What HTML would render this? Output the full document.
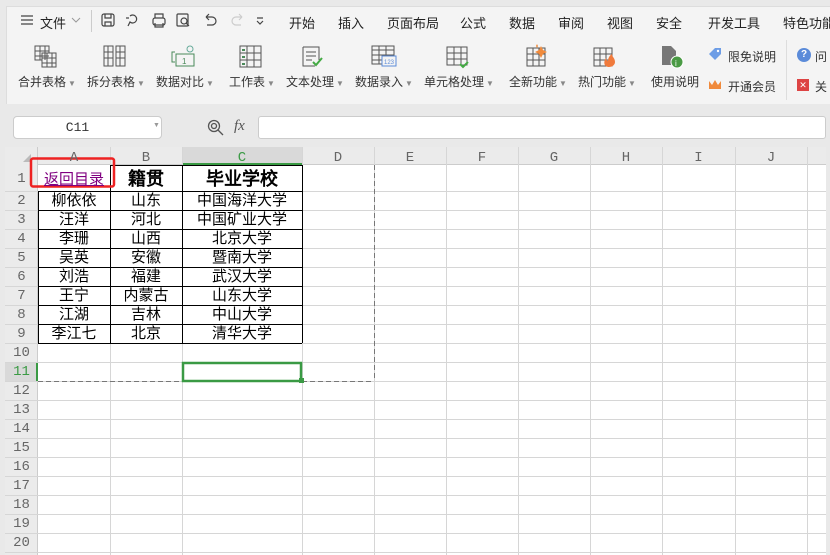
<!DOCTYPE html>
<html><head><meta charset="utf-8"><style>
*{margin:0;padding:0;box-sizing:border-box}
body{width:830px;height:555px;overflow:hidden;background:#e9e9e9;font-family:"Liberation Sans","Noto Sans CJK SC",sans-serif;position:relative;color:#333}
.a{position:absolute;white-space:nowrap}
.tb{position:absolute;left:6px;top:6px;width:824px;height:98px;background:#f4f4f4;border-top:1px solid #ddd;border-left:1px solid #ddd}
.menu{font-size:13px;top:13px;color:#222}
.lbl{font-size:12px;top:73px;color:#333}
.lbl i{font-style:normal;font-size:8px;color:#888;margin-left:2px}
.hd{font-family:"Liberation Mono",monospace;font-size:14px;color:#666;text-align:center;position:absolute}
.c{position:absolute;text-align:center;font-size:15px;color:#000;font-family:"Liberation Sans","WenQuanYi Zen Hei",sans-serif;height:19px;line-height:19px}
</style></head><body>
<div class="tb"></div>
<svg class="a" style="left:20px;top:14px" width="14" height="12"><path d="M1 2h12M1 6h12M1 10h12" stroke="#444" stroke-width="1.2"/></svg>
<div class="a menu" style="left:40px">文件</div>
<svg class="a" style="left:71px;top:17px" width="10" height="7"><path d="M1 1l4 4 4-4" stroke="#999" fill="none"/></svg>
<div class="a" style="left:91px;top:10px;width:1px;height:22px;background:#ccc"></div>
<svg class="a" style="left:100px;top:12px" width="170" height="18" fill="none" stroke="#444" stroke-width="1.2">
<rect x="2" y="2" width="12" height="12" rx="2"/><path d="M5 2v4h6V2M5 14v-4h6v4"/>
<path d="M30 4a4 4 0 1 1 0 6l-2 4M26 6h3"/>
<rect x="53" y="6" width="12" height="7" rx="2"/><path d="M55 6V2h8v4M55 11v4h8v-4"/>
<rect x="77" y="2" width="11" height="12" rx="1"/><circle cx="84" cy="9" r="3"/><path d="M86 11l3 3"/>
<path d="M106 5h6a4 4 0 0 1 0 8h-5M106 5l3-3M106 5l3 3"/>
<path stroke="#ccc" d="M142 5h-6a4 4 0 0 0 0 8h5M142 5l-3-3M142 5l-3 3"/>
<path d="M157 6h6M157 9l3 3 3-3"/>
</svg>
<div class="a menu" style="left:289px">开始</div>
<div class="a menu" style="left:338px">插入</div>
<div class="a menu" style="left:387px">页面布局</div>
<div class="a menu" style="left:460px">公式</div>
<div class="a menu" style="left:509px">数据</div>
<div class="a menu" style="left:558px">审阅</div>
<div class="a menu" style="left:607px">视图</div>
<div class="a menu" style="left:656px">安全</div>
<div class="a menu" style="left:708px">开发工具</div>
<div class="a menu" style="left:783px">特色功能</div>
<svg class="a" style="left:0;top:44px" width="830" height="26" fill="none" stroke="#555" stroke-width="1">
<rect x="35" y="2" width="14" height="14"/><rect x="42" y="9" width="14" height="14" fill="#f4f4f4"/><path d="M35 7h14M35 12h14M40 2v14M45 2v14M42 14h14M42 19h14M47 9v14M52 9v14"/>
<rect x="104" y="2" width="9" height="20"/><rect x="116" y="2" width="9" height="20"/><path d="M104 8h9M104 14h9M116 8h9M116 14h9M108 2v20M120 2v20"/>
<path stroke="#4a8a5a" d="M175 8h-3v10h3M176 10h18v12h-18z"/><circle cx="190" cy="5" r="3" stroke="#6a9"/><text x="182" y="20" font-size="8" fill="#4a8a5a" stroke="none">1</text>
<rect x="240" y="2" width="21" height="21"/><path d="M240 9h21M240 16h21M247 2v21M254 2v21"/><path stroke="#4a8a5a" stroke-width="2" d="M242 6h3M242 13h3M242 20h3"/>
<path d="M303 3h16v13M303 3v19h12M306 8h10M306 12h10M306 16h6"/><path stroke="#4a4" stroke-width="2" d="M313 18l3 3 6-7"/>
<rect x="372" y="2" width="22" height="18"/><path d="M372 6h22M372 11h22M372 16h22M379 2v18M386 2v18"/><rect x="382" y="12" width="14" height="10" fill="#f4f4f4" stroke="#5b8bd9"/><text x="384" y="20" font-size="6" fill="#5b8bd9" stroke="none">123</text>
<rect x="447" y="3" width="20" height="18"/><path d="M447 9h20M447 15h20M454 3v18M461 3v18"/><path stroke="#4a4" stroke-width="2" d="M460 20l3 3 5-5"/>
<rect x="527" y="4" width="18" height="18"/><path d="M527 10h18M527 16h18M533 4v18M539 4v18"/><path fill="#f08a3c" stroke="none" d="M541 2l2 4 4 2-4 2-2 4-2-4-4-2 4-2zM537 0l1 2-1 2-1-2z"/>
<rect x="594" y="4" width="18" height="18"/><path d="M594 10h18M594 16h18M600 4v18M606 4v18"/><path fill="#f07a3c" stroke="none" d="M609 23c-5 0-6-5-3-9 0 2 2 3 2 3 0-3 2-6 4-7 0 3 3 4 3 8 0 3-3 5-6 5z"/>
<path fill="#777" stroke="none" d="M662 2h9l5 5v14h-14z"/><circle cx="677" cy="18" r="6" fill="#4a9a44" stroke="#fff"/><text x="675" y="22" font-size="8" fill="#fff" stroke="none">i</text>
</svg>
<svg class="a" style="left:708px;top:48px" width="14" height="14"><path d="M1 6l6-6h6v6l-6 6z" fill="#6d9de6"/><circle cx="10" cy="3" r="1.2" fill="#fff"/></svg>
<div class="a" style="left:728px;top:48px;font-size:12px">限免说明</div>
<svg class="a" style="left:708px;top:79px" width="14" height="12"><path d="M1 2l3 4 3-5 3 5 3-4v8H1z" fill="#f08a3c"/></svg>
<div class="a" style="left:728px;top:78px;font-size:12px">开通会员</div>
<div class="a" style="left:786px;top:40px;width:1px;height:60px;background:#ddd"></div>
<div class="a" style="left:797px;top:48px;width:14px;height:14px;border-radius:50%;background:#5b8bd9;color:#fff;font-size:10px;text-align:center;line-height:14px;font-weight:bold">?</div>
<div class="a" style="left:815px;top:48px;font-size:12px">问</div>
<div class="a" style="left:797px;top:79px;width:12px;height:12px;background:#d44;color:#fff;font-size:9px;text-align:center;line-height:12px">✕</div>
<div class="a" style="left:815px;top:78px;font-size:12px">关</div>
<div class="a lbl" style="left:18px">合并表格<i>▼</i></div>
<div class="a lbl" style="left:87px">拆分表格<i>▼</i></div>
<div class="a lbl" style="left:156px">数据对比<i>▼</i></div>
<div class="a lbl" style="left:229px">工作表<i>▼</i></div>
<div class="a lbl" style="left:286px">文本处理<i>▼</i></div>
<div class="a lbl" style="left:355px">数据录入<i>▼</i></div>
<div class="a lbl" style="left:424px">单元格处理<i>▼</i></div>
<div class="a lbl" style="left:509px">全新功能<i>▼</i></div>
<div class="a lbl" style="left:578px">热门功能<i>▼</i></div>
<div class="a lbl" style="left:651px">使用说明</div>
<div class="a" style="left:13px;top:116px;width:149px;height:23px;background:#fff;border:1px solid #ccc;border-radius:4px;font-family:'Liberation Mono',monospace;font-size:13px;text-align:center;line-height:21px;padding-right:20px">C11</div>
<div class="a" style="left:153px;top:122px;font-size:7px;color:#999">▼</div>
<svg class="a" style="left:207px;top:119px" width="18" height="18" fill="none" stroke="#555" stroke-width="1.3"><circle cx="7" cy="7" r="5.5"/><circle cx="7" cy="7" r="2.5"/><path d="M11 11l5 5"/></svg>
<div class="a" style="left:234px;top:118px;font-style:italic;font-size:15px;color:#555;font-family:'Liberation Serif',serif">fx</div>
<div class="a" style="left:258px;top:116px;width:568px;height:23px;background:#fff;border:1px solid #ccc;border-radius:3px"></div>
<div class="a" style="left:5px;top:147px;width:821px;height:408px;background:#fff"></div>
<div class="a" style="left:5px;top:147px;width:821px;height:18px;background:#ebebeb;border-bottom:1px solid #ccc"></div>
<div class="a" style="left:5px;top:147px;width:33px;height:408px;background:#ebebeb;border-right:1px solid #ccc"></div>
<div class="a" style="left:182px;top:147px;width:120px;height:18px;background:#d9d9d9;border-bottom:2px solid #3a9a44"></div>
<div class="a" style="left:5px;top:362px;width:33px;height:19px;background:#d9d9d9;border-right:2px solid #3a9a44"></div>
<svg class="a" style="left:22px;top:153px" width="10" height="10"><path d="M9 1v8H1z" fill="#bbb"/></svg>
<svg class="a" style="left:0;top:0" width="830" height="555">
<g stroke="#d6d6d6" stroke-width="1">
<path d="M110.5 147v408M182.5 147v408M302.5 147v408M374.5 147v408M446.5 147v408M518.5 147v408M590.5 147v408M662.5 147v408M735.5 147v408M807.5 147v408"/>
<path d="M5 191.5h821M5 210.5h821M5 229.5h821M5 248.5h821M5 267.5h821M5 286.5h821M5 305.5h821M5 324.5h821M5 343.5h821M5 362.5h821M5 381.5h821M5 400.5h821M5 419.5h821M5 438.5h821M5 457.5h821M5 476.5h821M5 495.5h821M5 514.5h821M5 533.5h821M5 552.5h821"/>
</g>
<g stroke="#000" stroke-width="1" fill="none">
<path d="M38.5 191v152M110.5 165v178M182.5 165v178M302.5 165v178"/>
<path d="M38 191.5h264M38 210.5h264M38 229.5h264M38 248.5h264M38 267.5h264M38 286.5h264M38 305.5h264M38 324.5h264M38 343.5h264M110 165.5h192"/>
</g>
<path d="M374.5 165v216M38 381.5h336" stroke="#777" stroke-dasharray="5,3" fill="none"/>
<rect x="183" y="363" width="118" height="18" fill="none" stroke="#3a9a44" stroke-width="2.5"/>
<rect x="299" y="378" width="5" height="5" fill="#3a9a44"/>
<rect x="31" y="158.5" width="83" height="28" rx="2" fill="none" stroke="#e22" stroke-width="2.5"/>
</svg>
<div class="hd" style="left:38px;top:150px;width:72px">A</div>
<div class="hd" style="left:110px;top:150px;width:72px">B</div>
<div class="hd" style="left:182px;top:150px;width:120px;color:#3a9a44">C</div>
<div class="hd" style="left:302px;top:150px;width:72px">D</div>
<div class="hd" style="left:374px;top:150px;width:72px">E</div>
<div class="hd" style="left:446px;top:150px;width:72px">F</div>
<div class="hd" style="left:518px;top:150px;width:72px">G</div>
<div class="hd" style="left:590px;top:150px;width:72px">H</div>
<div class="hd" style="left:662px;top:150px;width:73px">I</div>
<div class="hd" style="left:735px;top:150px;width:72px">J</div>
<div class="hd" style="left:5px;top:171px;width:33px">1</div>
<div class="hd" style="left:5px;top:193px;width:33px">2</div>
<div class="hd" style="left:5px;top:212px;width:33px">3</div>
<div class="hd" style="left:5px;top:231px;width:33px">4</div>
<div class="hd" style="left:5px;top:250px;width:33px">5</div>
<div class="hd" style="left:5px;top:269px;width:33px">6</div>
<div class="hd" style="left:5px;top:288px;width:33px">7</div>
<div class="hd" style="left:5px;top:307px;width:33px">8</div>
<div class="hd" style="left:5px;top:326px;width:33px">9</div>
<div class="hd" style="left:5px;top:345px;width:33px">10</div>
<div class="hd" style="left:5px;top:364px;width:33px;color:#3a9a44">11</div>
<div class="hd" style="left:5px;top:383px;width:33px">12</div>
<div class="hd" style="left:5px;top:402px;width:33px">13</div>
<div class="hd" style="left:5px;top:421px;width:33px">14</div>
<div class="hd" style="left:5px;top:440px;width:33px">15</div>
<div class="hd" style="left:5px;top:459px;width:33px">16</div>
<div class="hd" style="left:5px;top:478px;width:33px">17</div>
<div class="hd" style="left:5px;top:497px;width:33px">18</div>
<div class="hd" style="left:5px;top:516px;width:33px">19</div>
<div class="hd" style="left:5px;top:535px;width:33px">20</div>
<div class="c" style="left:38px;top:170px;width:72px;color:#800080;text-decoration:underline">返回目录</div>
<div class="c" style="left:110px;top:168px;width:72px;font-size:18px;font-weight:bold;height:22px;line-height:22px">籍贯</div>
<div class="c" style="left:182px;top:168px;width:120px;font-size:18px;font-weight:bold;height:22px;line-height:22px">毕业学校</div>
<div class="c" style="left:38px;top:191px;width:72px">柳依依</div><div class="c" style="left:110px;top:191px;width:72px">山东</div><div class="c" style="left:182px;top:191px;width:120px">中国海洋大学</div>
<div class="c" style="left:38px;top:210px;width:72px">汪洋</div><div class="c" style="left:110px;top:210px;width:72px">河北</div><div class="c" style="left:182px;top:210px;width:120px">中国矿业大学</div>
<div class="c" style="left:38px;top:229px;width:72px">李珊</div><div class="c" style="left:110px;top:229px;width:72px">山西</div><div class="c" style="left:182px;top:229px;width:120px">北京大学</div>
<div class="c" style="left:38px;top:248px;width:72px">吴英</div><div class="c" style="left:110px;top:248px;width:72px">安徽</div><div class="c" style="left:182px;top:248px;width:120px">暨南大学</div>
<div class="c" style="left:38px;top:267px;width:72px">刘浩</div><div class="c" style="left:110px;top:267px;width:72px">福建</div><div class="c" style="left:182px;top:267px;width:120px">武汉大学</div>
<div class="c" style="left:38px;top:286px;width:72px">王宁</div><div class="c" style="left:110px;top:286px;width:72px">内蒙古</div><div class="c" style="left:182px;top:286px;width:120px">山东大学</div>
<div class="c" style="left:38px;top:305px;width:72px">江湖</div><div class="c" style="left:110px;top:305px;width:72px">吉林</div><div class="c" style="left:182px;top:305px;width:120px">中山大学</div>
<div class="c" style="left:38px;top:324px;width:72px">李江七</div><div class="c" style="left:110px;top:324px;width:72px">北京</div><div class="c" style="left:182px;top:324px;width:120px">清华大学</div>
</body></html>
